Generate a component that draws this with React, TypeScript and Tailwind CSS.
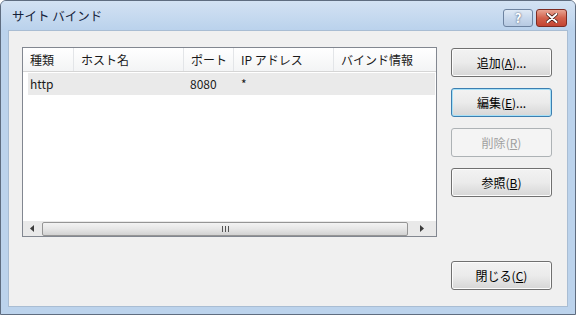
import React from "react";

const font = { fontFamily: '"Noto Sans CJK JP", "Noto Sans", sans-serif' };

function Btn({ label, k, rest, focused, disabled }: { label: string; k: string; rest: string; focused?: boolean; disabled?: boolean }) {
  const base = "h-[29px] w-[101px] rounded-[3px] flex items-center justify-center text-[12px]";
  const cls = disabled
    ? "border border-[#adb2b5] bg-[#f4f4f4] text-[#a0a0a0]"
    : focused
    ? "border border-[#3c7fb1] bg-gradient-to-b from-[#f2f2f2] via-[#ebebeb] to-[#d6d6d6] text-black shadow-[inset_0_0_0_1px_#a6e0f7]"
    : "border border-[#707070] bg-gradient-to-b from-[#f2f2f2] via-[#ebebeb] to-[#d6d6d6] text-black shadow-[inset_0_0_0_1px_#fcfcfc]";
  return (
    <div className={`${base} ${cls}`}>
      {label}(<span className="underline">{k}</span>){rest}
    </div>
  );
}

export default function App() {
  const cols = [
    { t: "種類", w: "w-[51px]" },
    { t: "ホスト名", w: "w-[110px]" },
    { t: "ポート", w: "w-[50px]" },
    { t: "IP アドレス", w: "w-[100px]" },
    { t: "バインド情報", w: "w-[100px]" },
  ];
  return (
    <div className="w-[576px] h-[315px] bg-white" style={font}>
      <div className="w-full h-full flex flex-col rounded-t-[6px] border border-[#5f6d80] bg-[#bcd3ec] overflow-hidden">
        {/* Title bar */}
        <div className="h-[29px] flex items-center pl-[11px] pr-[8px] bg-gradient-to-b from-[#d3e2f3] to-[#bad2ec]">
          <span className="text-[12.5px] text-[#15223a] pt-[2px]">サイト バインド</span>
          <div className="ml-auto flex gap-[3px] self-start mt-[8px]">
            <div className="w-[30px] h-[18px] rounded-[3px] border border-[#6d83a0] bg-gradient-to-b from-[#dfe9f5] via-[#c8d8ec] to-[#b7cae2] flex items-center justify-center text-[13px] font-bold text-white [text-shadow:0_0_2px_#2a3a56]">
              ?
            </div>
            <div className="w-[31px] h-[18px] rounded-[3px] border border-[#7d2b22] bg-gradient-to-b from-[#e8a493] via-[#d2614c] to-[#c34432] flex items-center justify-center">
              <svg width="12" height="10" viewBox="0 0 12 10">
                <path d="M1.5 1 L10.5 9 M10.5 1 L1.5 9" stroke="#3a1410" strokeWidth="3.4" strokeLinecap="round" />
                <path d="M1.5 1 L10.5 9 M10.5 1 L1.5 9" stroke="#ffffff" strokeWidth="2" strokeLinecap="round" />
              </svg>
            </div>
          </div>
        </div>
        {/* Client area */}
        <div className="flex-1 flex ml-[7px] mr-[7px] mb-[7px] bg-[#f0f0f0] border border-[#a9bdd3]">
          <div className="pt-[16px] pl-[13px]">
            <div className="w-[415px] h-[190px] border border-[#828790] bg-white flex flex-col">
              <div className="h-[24px] flex border-b border-[#d5d5d5] bg-gradient-to-b from-white to-[#f3f4f5]">
                {cols.map((c, i) => (
                  <div key={i} className={`${c.w} h-full flex items-center pl-[7px] text-[12px] text-[#1a1a1a] ${i < 4 ? "border-r border-[#e3e5e8]" : ""}`}>
                    {c.t}
                  </div>
                ))}
              </div>
              <div className="mt-[1px] ml-[5px] mr-[1px] h-[22px] bg-[#eaeaea] flex items-center text-[12px] text-[#1a1a1a]">
                <span className="pl-[2px] w-[162px]">http</span>
                <span className="w-[51px]">8080</span>
                <span>*</span>
              </div>
              <div className="flex-1" />
              {/* Horizontal scrollbar */}
              <div className="h-[15px] flex items-center bg-[#e9e9e9]">
                <div className="w-[18px] h-full flex items-center justify-center">
                  <svg width="4" height="7" viewBox="0 0 4 7"><path d="M4 0 L0 3.5 L4 7 Z" fill="#3b3b3b" /></svg>
                </div>
                <div className="w-[366px] h-[14px] ml-[1px] rounded-[2px] border border-[#959595] bg-gradient-to-b from-[#f3f3f3] via-[#e6e6e6] to-[#d2d2d2] flex items-center justify-center">
                  <svg width="7" height="6" viewBox="0 0 7 6">
                    <path d="M0.5 0 V6 M3.5 0 V6 M6.5 0 V6" stroke="#555" strokeWidth="1" />
                  </svg>
                </div>
                <div className="flex-1 h-full flex items-center justify-center">
                  <svg width="4" height="7" viewBox="0 0 4 7"><path d="M0 0 L4 3.5 L0 7 Z" fill="#3b3b3b" /></svg>
                </div>
              </div>
            </div>
          </div>
          <div className="ml-[14px] pt-[17px] pb-[16px] flex flex-col gap-[11px]">
            <Btn label="追加" k="A" rest="..." />
            <Btn label="編集" k="E" rest="..." focused />
            <Btn label="削除" k="R" rest="" disabled />
            <Btn label="参照" k="B" rest="" />
            <div className="mt-auto">
              <Btn label="閉じる" k="C" rest="" />
            </div>
          </div>
        </div>
      </div>
    </div>
  );
}
